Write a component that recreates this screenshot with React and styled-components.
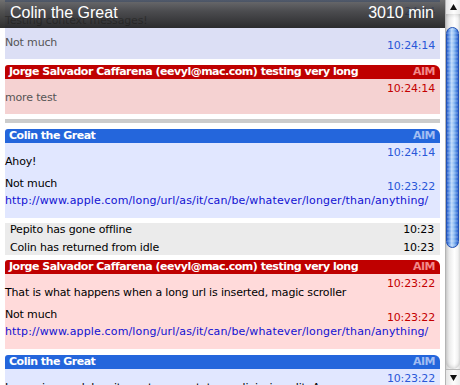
import React from "react";
import styled, { createGlobalStyle } from "styled-components";

const GlobalStyle = createGlobalStyle`
  html, body { margin: 0; padding: 0; background: #fff; overflow: hidden; }
  body { font-family: "DejaVu Sans", "Liberation Sans", sans-serif; }
`;

const TONES = {
  blue: {
    head: "#2466dc",
    service: "#a3bef2",
    body: "#e1e7ff",
    fadedBody: "#dcdff5",
    stamp: "#2a58d8",
  },
  red: {
    head: "#bf0000",
    service: "#f28a8a",
    body: "#ffdada",
    fadedBody: "#f5d2d2",
    stamp: "#c40000",
  },
};

const Window = styled.div`
  position: relative;
  display: flex;
  width: 460px;
  height: 385px;
  overflow: hidden;
  background: #fff;
`;

const Viewport = styled.div`
  flex: 1;
  min-width: 0;
  overflow: hidden;
  padding: 0 5px;
`;

const Feed = styled.div`
  display: flex;
  flex-direction: column;
  gap: 5.5px;
  margin-top: -12px;
`;

const TitleBar = styled.header`
  position: absolute;
  top: 0;
  left: 0;
  right: 15px;
  height: 28px;
  box-sizing: border-box;
  padding: 4px 11px 0 10px;
  display: flex;
  justify-content: space-between;
  font-family: "Liberation Sans", Arial, sans-serif;
  font-size: 16px;
  line-height: 18px;
  color: #fff;
  background: linear-gradient(
    to bottom,
    rgba(88, 88, 88, 0.86) 0%,
    rgba(52, 52, 52, 0.86) 40%,
    rgba(24, 24, 24, 0.9) 100%
  );
  z-index: 2;
`;

const Block = styled.section`
  display: flex;
  flex-direction: column;
`;

const BlockHeader = styled.div`
  display: flex;
  justify-content: space-between;
  align-items: center;
  height: 14px;
  padding: 0 5px 0 4px;
  border-radius: 3px 6px 0 0;
  background: ${(p) => TONES[p.$tone].head};
  color: #fff;
  font-size: 11px;
  font-weight: bold;
  line-height: 14px;
  letter-spacing: -0.5px;
  white-space: nowrap;
  overflow: hidden;
`;

const Service = styled.span`
  color: ${(p) => TONES[p.$tone].service};
`;

const BlockBody = styled.div`
  padding: 0 5px 8px 0;
  background: ${(p) => (p.$faded ? TONES[p.$tone].fadedBody : TONES[p.$tone].body)};
  color: ${(p) => (p.$faded ? "#555" : "#000")};
  font-size: 11px;
  letter-spacing: -0.17px;
`;

const Message = styled.div`
  margin-top: ${(p) => (p.$first ? 0 : 6)}px;
`;

const StampRow = styled.div`
  height: 7px;
  padding-top: 4px;
  line-height: 12px;
  text-align: right;
`;

const Stamp = styled.span`
  color: ${(p) => TONES[p.$tone].stamp};
  white-space: nowrap;
`;

const InlineStamp = styled(Stamp)`
  height: 10px;
  padding-top: 6px;
  line-height: 10px;
`;

const TextRow = styled.div`
  display: flex;
  justify-content: space-between;
  align-items: flex-start;
  height: 16px;
`;

const Text = styled.div`
  line-height: 16px;
  white-space: nowrap;
`;

const Link = styled.a`
  display: block;
  line-height: 18px;
  color: #1212d2;
  text-decoration: none;
  letter-spacing: 0.14px;
  white-space: nowrap;
`;

const Separator = styled.div`
  height: 4px;
  background: #cccccc;
`;

const StatusBlock = styled.div`
  display: flex;
  flex-direction: column;
  gap: 3.5px;
  padding: 0 6px 0 5px;
  background: #ebebeb;
  font-size: 11px;
  letter-spacing: -0.17px;
  color: #000;
`;

const StatusRow = styled.div`
  display: flex;
  justify-content: space-between;
  line-height: 14px;
`;

const Scrollbar = styled.div`
  width: 15px;
  box-sizing: border-box;
  display: flex;
  flex-direction: column;
  border-left: 1px solid #b4b4b4;
  background: linear-gradient(
    to right,
    #cfcfcf 0%,
    #ececec 25%,
    #ffffff 60%,
    #f2f2f2 85%,
    #dedede 100%
  );
`;

const ArrowButton = styled.div`
  height: ${(p) => p.$h}px;
  display: flex;
  align-items: center;
  justify-content: center;
  ${(p) => (p.$down ? "border-top: 1px solid #b8b8b8;" : "")}
  background: linear-gradient(to right, #e4e4e4, #fdfdfd 55%, #ececec);
`;

const Track = styled.div`
  flex: 1;
  padding-top: 13px;
  border-radius: 0 0 7px 7px;
  box-shadow: inset 0 -3px 4px -2px rgba(0, 0, 0, 0.18),
    inset 0 4px 4px -3px rgba(0, 0, 0, 0.14);
`;

const Thumb = styled.div`
  height: 221px;
  margin: 0 1px 0 0;
  box-sizing: border-box;
  border-radius: 7px;
  border: 1px solid #2352b4;
  background: repeating-linear-gradient(
      to bottom,
      rgba(255, 255, 255, 0.14) 0px,
      rgba(255, 255, 255, 0.14) 2px,
      rgba(255, 255, 255, 0) 2px,
      rgba(255, 255, 255, 0) 4px
    ),
    linear-gradient(
      to right,
      #2d61cc 0%,
      #6ea1ea 22%,
      #bcd9fb 42%,
      #93c0f4 62%,
      #4f88de 85%,
      #2d61cc 100%
    );
`;

function Arrow({ down }) {
  return (
    <svg width="7" height="6" viewBox="0 0 7 6">
      <polygon points={down ? "0,0 7,0 3.5,6" : "3.5,0 7,6 0,6"} fill="#111" />
    </svg>
  );
}

function Msg({ tone, time, first, text, url }) {
  if (first) {
    return (
      <Message $first>
        <StampRow>
          <Stamp $tone={tone}>{time}</Stamp>
        </StampRow>
        <Text>{text}</Text>
        {url && <Link href="#">{url}</Link>}
      </Message>
    );
  }
  return (
    <Message>
      <TextRow>
        <Text>{text}</Text>
        <InlineStamp $tone={tone}>{time}</InlineStamp>
      </TextRow>
      {url && <Link href="#">{url}</Link>}
    </Message>
  );
}

function ChatBlock({ tone, sender, faded, messages }) {
  return (
    <Block>
      <BlockHeader $tone={tone}>
        <span>{sender}</span>
        <Service $tone={tone}>AIM</Service>
      </BlockHeader>
      <BlockBody $tone={tone} $faded={faded}>
        {messages.map((m, i) => (
          <Msg key={i} tone={tone} first={i === 0} {...m} />
        ))}
      </BlockBody>
    </Block>
  );
}

const URL = "http://www.apple.com/long/url/as/it/can/be/whatever/longer/than/anything/";
const JORGE = "Jorge Salvador Caffarena (eevyl@mac.com) testing very long";

export default function App() {
  return (
    <>
      <GlobalStyle />
      <Window>
        <TitleBar>
          <span>Colin the Great</span>
          <span>3010 min</span>
        </TitleBar>
        <Viewport>
          <Feed>
            <ChatBlock
              tone="blue"
              sender="Colin the Great"
              faded
              messages={[
                { time: "10:24:14", text: "Testing context messages!" },
                { time: "10:24:14", text: "Not much" },
              ]}
            />
            <ChatBlock
              tone="red"
              sender={JORGE}
              faded
              messages={[{ time: "10:24:14", text: "more test" }]}
            />
            <Separator />
            <ChatBlock
              tone="blue"
              sender="Colin the Great"
              messages={[
                { time: "10:24:14", text: "Ahoy!" },
                { time: "10:23:22", text: "Not much", url: URL },
              ]}
            />
            <StatusBlock>
              <StatusRow>
                <span>Pepito has gone offline</span>
                <span>10:23</span>
              </StatusRow>
              <StatusRow>
                <span>Colin has returned from idle</span>
                <span>10:23</span>
              </StatusRow>
            </StatusBlock>
            <ChatBlock
              tone="red"
              sender={JORGE}
              messages={[
                {
                  time: "10:23:22",
                  text: "That is what happens when a long url is inserted, magic scroller",
                },
                { time: "10:23:22", text: "Not much", url: URL },
              ]}
            />
            <ChatBlock
              tone="blue"
              sender="Colin the Great"
              messages={[
                {
                  time: "10:23:22",
                  text: "Lorem ipsum dolor sit amet, consectetuer adipiscing elit. Aenean",
                },
              ]}
            />
          </Feed>
        </Viewport>
        <Scrollbar>
          <ArrowButton $h={14}>
            <Arrow />
          </ArrowButton>
          <Track>
            <Thumb />
          </Track>
          <ArrowButton $h={15} $down>
            <Arrow down />
          </ArrowButton>
        </Scrollbar>
      </Window>
    </>
  );
}
